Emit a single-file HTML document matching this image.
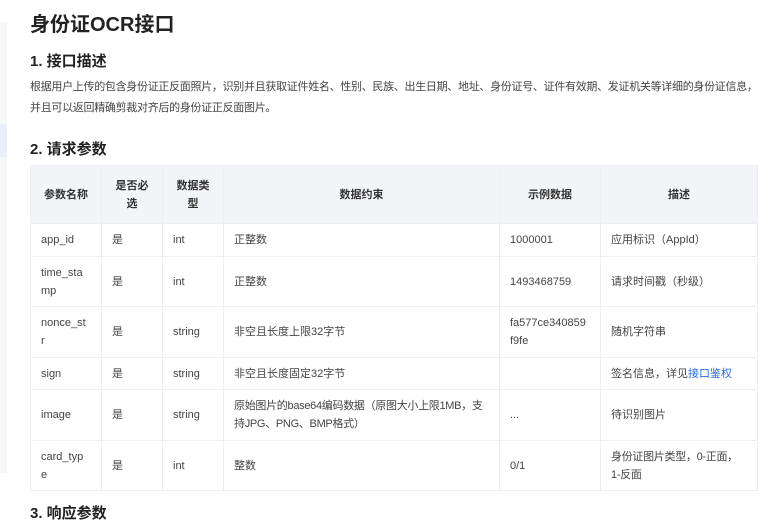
<!DOCTYPE html>
<html><head><meta charset="utf-8"><style>
*{margin:0;padding:0;box-sizing:border-box}
body{width:768px;height:513px;overflow:hidden;background:#fff;font-family:"Liberation Sans","Noto Sans CJK SC",sans-serif;color:#333;position:relative}
.side{position:absolute;left:0;top:22px;width:7px;height:451px;background:#f6f7f9}
.hl{position:absolute;left:0;top:124px;width:7px;height:33px;background:#eaeff8}
h1{position:absolute;left:30px;top:10px;font-size:20px;font-weight:bold;color:#222;line-height:30px}
h2{position:absolute;left:30px;font-size:15px;font-weight:bold;color:#222;line-height:22px}
p{position:absolute;left:30px;top:77px;width:740px;font-size:11px;line-height:21px;color:#444;letter-spacing:-0.3px;white-space:nowrap}
table{position:absolute;left:30px;top:165px;width:727px;border-collapse:collapse;font-size:11px;color:#444;table-layout:fixed}
td,th{border:1px solid #eceef1;padding:0 10px;line-height:18px;text-align:left;font-weight:normal;white-space:nowrap;overflow:hidden}
th{background:#f2f4f7;font-weight:bold;color:#333;text-align:center;height:58px}
a{color:#2a6ee8;text-decoration:none}
.t{letter-spacing:-0.3px}
</style></head><body>
<div class="side"></div><div class="hl"></div>
<h1>身份证OCR接口</h1>
<h2 style="top:51px">1. 接口描述</h2>
<p>根据用户上传的包含身份证正反面照片，识别并且获取证件姓名、性别、民族、出生日期、地址、身份证号、证件有效期、发证机关等详细的身份证信息，<br>并且可以返回精确剪裁对齐后的身份证正反面图片。</p>
<h2 style="top:139px">2. 请求参数</h2>
<table>
<colgroup><col style="width:71px"><col style="width:61px"><col style="width:61px"><col style="width:276px"><col style="width:101px"><col style="width:157px"></colgroup>
<tr><th>参数名称</th><th>是否必<br>选</th><th>数据类<br>型</th><th>数据约束</th><th>示例数据</th><th>描述</th></tr>
<tr style="height:33px"><td>app_id</td><td>是</td><td>int</td><td>正整数</td><td>1000001</td><td>应用标识（AppId）</td></tr>
<tr style="height:50px"><td>time_sta<br>mp</td><td>是</td><td>int</td><td>正整数</td><td>1493468759</td><td>请求时间戳（秒级）</td></tr>
<tr style="height:51px"><td>nonce_st<br>r</td><td>是</td><td>string</td><td>非空且长度上限32字节</td><td>fa577ce340859<br>f9fe</td><td>随机字符串</td></tr>
<tr style="height:32px"><td>sign</td><td>是</td><td>string</td><td>非空且长度固定32字节</td><td></td><td>签名信息，详见<a>接口鉴权</a></td></tr>
<tr style="height:51px"><td>image</td><td>是</td><td>string</td><td class="t">原始图片的base64编码数据（原图大小上限1MB，支<br>持JPG、PNG、BMP格式）</td><td>...</td><td>待识别图片</td></tr>
<tr style="height:50px"><td>card_typ<br>e</td><td>是</td><td>int</td><td>整数</td><td>0/1</td><td class="t">身份证图片类型，0-正面，<br>1-反面</td></tr>
</table>
<h2 style="top:503px">3. 响应参数</h2>
</body></html>
